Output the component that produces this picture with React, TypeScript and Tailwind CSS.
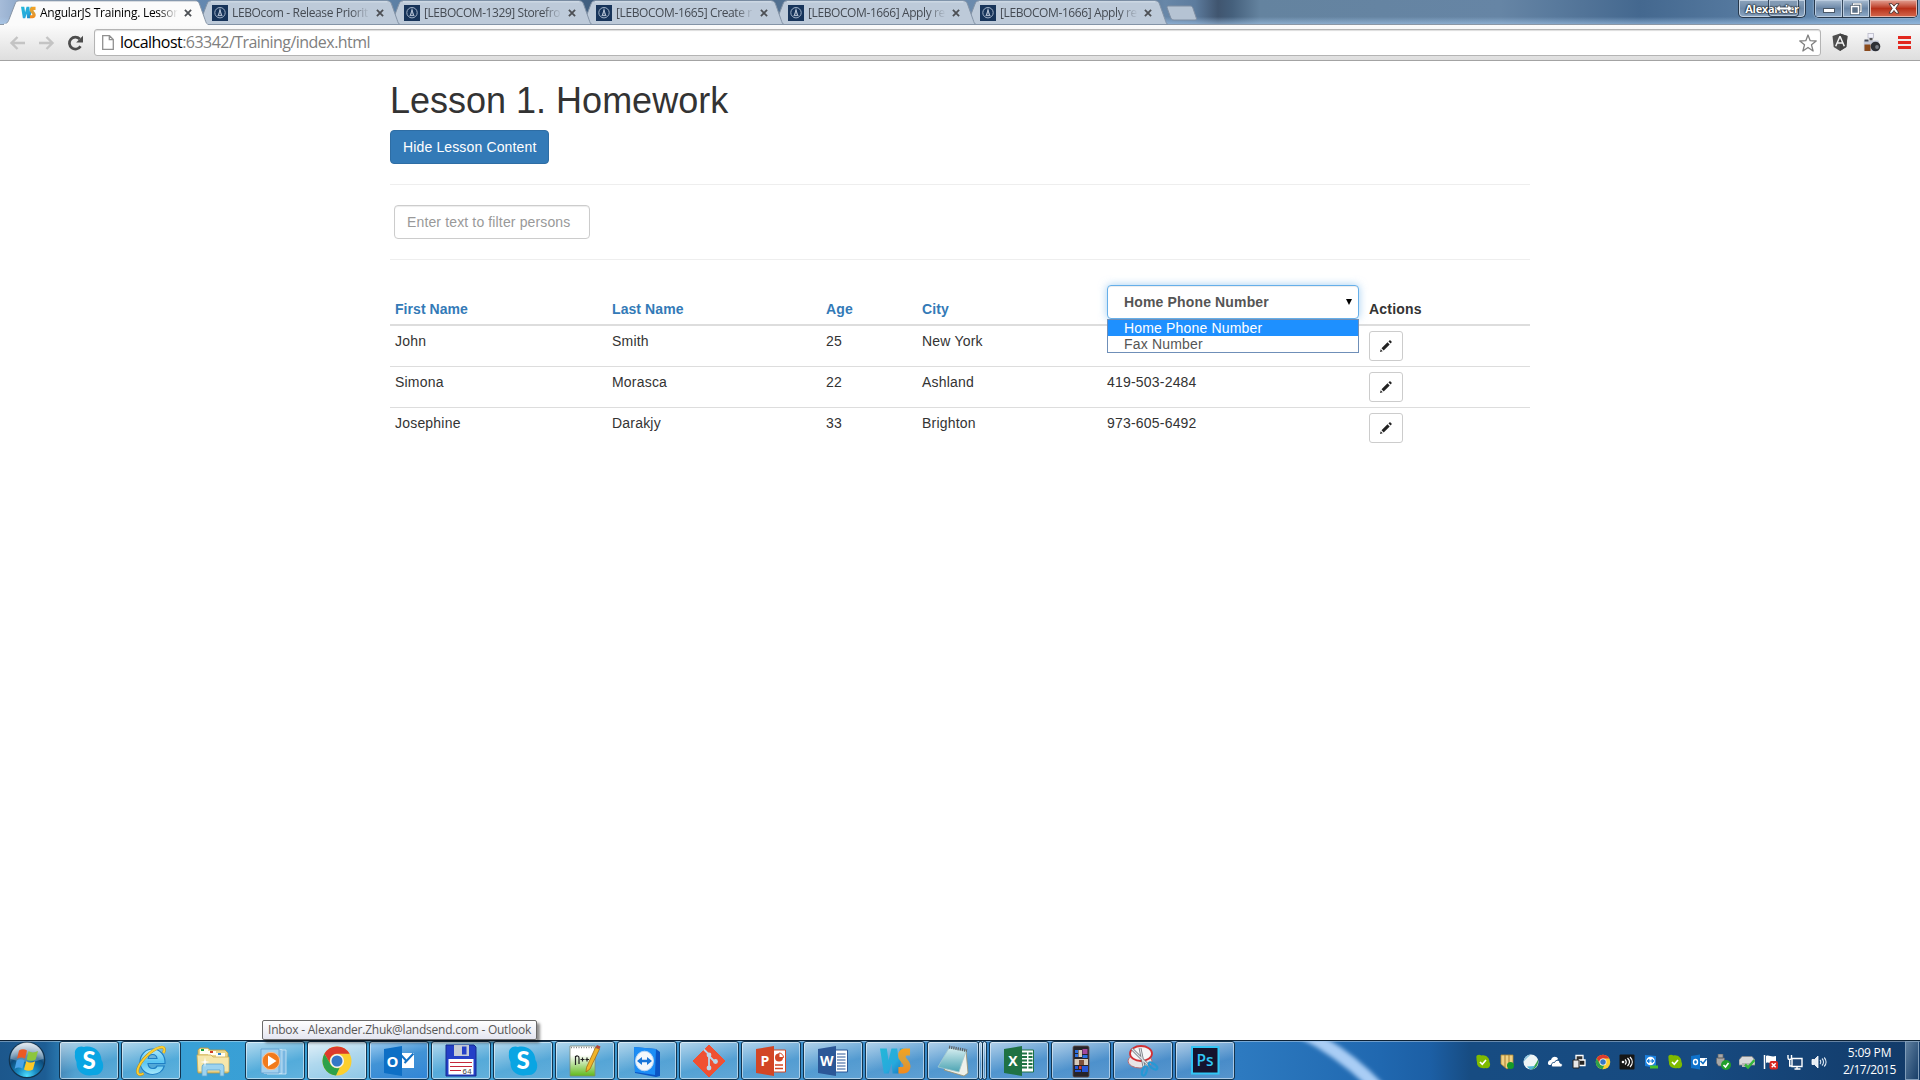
import type { ReactNode } from 'react';

const UI = "font-['Open_Sans','Noto_Sans',sans-serif]";
const BODY = "font-['Liberation_Sans',Arial,sans-serif]";

/* ---------- Browser window ---------- */

function LandsEndFavicon() {
  return (
    <svg className="h-4 w-4 shrink-0" viewBox="0 0 16 16">
      <rect width="16" height="16" fill="#17345a" />
      <circle cx="8" cy="7.7" r="5.2" fill="none" stroke="#9fb0c6" strokeWidth="1" />
      <path d="M8 3.6v6M6.3 10.2l1.7-5 1.7 5M5.6 10.6h4.8" fill="none" stroke="#b5c2d4" strokeWidth="1" />
    </svg>
  );
}

function WebStormMark({ className }: { className: string }) {
  return (
    <svg className={className} viewBox="0 0 32 28" preserveAspectRatio="none">
      <defs>
        <linearGradient id="wsw" x1="0" y1="0" x2="1" y2="1">
          <stop offset="0" stopColor="#23b8d8" />
          <stop offset="0.6" stopColor="#27a9dc" />
          <stop offset="1" stopColor="#1778c0" />
        </linearGradient>
        <linearGradient id="wss" x1="0" y1="0" x2="0" y2="1">
          <stop offset="0" stopColor="#f9a11c" />
          <stop offset="0.45" stopColor="#d9a03a" />
          <stop offset="1" stopColor="#f58a1a" />
        </linearGradient>
      </defs>
      <path d="M0 1.500h7l1.800 12 3-12h6l1.200 11 1.500-11h3.500l-4.500 25h-6.500L12 16.500 9 26.500H4Z" fill="url(#wsw)" />
      <path d="M31 1.500v7h-3c-1.500 0-2 1.200-1 2.400l2.500 3c4 5 1.500 12.600-5 12.600h-5.500v-6.500h3.500c2 0 2.200-1.700 1-3L21 14c-4.500-5-2-12.300 4.500-12.500Z" fill="url(#wss)" />
    </svg>
  );
}

function CloseGlyph() {
  return (
    <svg className="h-2 w-2 shrink-0" viewBox="0 0 8 8">
      <path d="M.9.9l6.200 6.200M7.100.9L.9 7.100" stroke="#4c4f54" strokeWidth="1.800" />
    </svg>
  );
}

type TabInfo = { title: string; active?: boolean; z: string; tracking: string };

const tabs: TabInfo[] = [
  { title: 'AngularJS Training. Lesson', active: true, z: 'z-[6]', tracking: 'tracking-[-0.26px]' },
  { title: 'LEBOcom - Release Priorit', z: 'z-[5]', tracking: 'tracking-[-0.36px]' },
  { title: '[LEBOCOM-1329] Storefro', z: 'z-[4]', tracking: 'tracking-[-0.43px]' },
  { title: '[LEBOCOM-1665] Create r', z: 'z-[3]', tracking: 'tracking-[-0.4px]' },
  { title: '[LEBOCOM-1666] Apply re', z: 'z-[2]', tracking: 'tracking-[-0.4px]' },
  { title: '[LEBOCOM-1666] Apply re', z: 'z-[1]', tracking: 'tracking-[-0.4px]' },
];

function Tab({ tab }: { tab: TabInfo }) {
  return (
    <div className={`relative -mr-[13px] flex h-[25px] w-[205px] shrink-0 items-center pl-[17px] ${tab.z}`}>
      <svg className="absolute inset-0 h-[25px] w-[205px]" viewBox="0 0 205 25">
        <path
          d="M0 24.500C4 24 5 22 6 19.500L12 4C13 1.500 14 .8 16.500.8H192C194.500.8 195.500 1.500 196.500 4L202 19.500C203 22.500 203.500 24 205 24.500Z"
          fill={tab.active ? '#fbfbfb' : '#bdcad9'}
          stroke={tab.active ? '#8795a6' : '#8393a6'}
          strokeWidth="1"
        />
        {tab.active ? (
          <path d="M1 24.500H204.500" stroke="#fbfbfb" strokeWidth="1.500" />
        ) : (
          <path d="M16 1.800H192.500" stroke="#dbe4ee" strokeWidth="1" />
        )}
      </svg>
      <div className="relative flex w-full items-center">
        <span className="flex w-4 shrink-0 justify-center">
          {tab.active ? <WebStormMark className="h-[13px] w-[15px]" /> : <LandsEndFavicon />}
        </span>
        <span
          className={`ml-1 w-[142px] text-[12px] leading-4 whitespace-nowrap ${tab.tracking} ${tab.active ? 'text-black' : 'text-[#454b53]'} [mask-image:linear-gradient(90deg,#000_84%,transparent_97%)]`}
        >
          {tab.title}
        </span>
        <span className="ml-[2px] flex">
          <CloseGlyph />
        </span>
      </div>
    </div>
  );
}

function WindowControls() {
  return (
    <div className="flex items-start">
      <div className="relative mr-2 flex h-[18px] w-[68px] items-center justify-center rounded-b-[5px] border border-t-0 border-[#26384c] bg-linear-to-b from-[#8ca4bd] via-[#6f8aa8] to-[#8aa5c2] shadow-[inset_0_0_0_1px_#c3d2e2]">
        <div className="absolute top-0 right-[6px] flex h-[17px] w-[31px] items-center justify-center rounded-b-[4px] border border-t-0 border-[#34465a] bg-[#8299b3]/60 shadow-[inset_0_0_0_1px_#b9c9db]" />
        <span className="relative text-[11px] leading-4 font-bold tracking-[-0.3px] text-white [text-shadow:0_0_2px_#000,0_0_2px_#000]">
          Alexander
        </span>
        <svg className="absolute top-[4px] right-[12px] h-[9px] w-[18px]" viewBox="0 0 18 9">
          <path d="M.7 4.500L5 .8v2.300h8V.8l4.300 3.700L13 8.200V5.900H5v2.300Z" fill="#fff" stroke="#4a5868" strokeWidth=".8" />
        </svg>
      </div>
      <div className="flex h-[18px] overflow-hidden rounded-b-[5px] border border-t-0 border-[#26384c] shadow-[0_0_2px_#c8d8ea]">
        <div className="flex w-[28px] items-center justify-center border-r border-[#34465a] bg-linear-to-b from-[#a9bdd2] via-[#6a86a6] to-[#8fabc9] shadow-[inset_0_0_0_1px_#bccde0]">
          <div className="mt-1 h-[5px] w-[12px] border border-[#4a5868] bg-white" />
        </div>
        <div className="flex w-[27px] items-center justify-center border-r border-[#34465a] bg-linear-to-b from-[#a9bdd2] via-[#6a86a6] to-[#8fabc9] shadow-[inset_0_0_0_1px_#bccde0]">
          <svg className="h-3 w-3" viewBox="0 0 12 12">
            <path d="M3.500 3V1H11v7.500H9" fill="none" stroke="#43505e" strokeWidth="2.400" />
            <path d="M3.500 3V1H11v7.500H9" fill="none" stroke="#fff" strokeWidth="1.300" />
            <rect x="1.500" y="3.500" width="7" height="7" fill="#5d7187" stroke="#43505e" strokeWidth="2.600" />
            <rect x="1.500" y="3.500" width="7" height="7" fill="#5d7187" stroke="#fff" strokeWidth="1.500" />
          </svg>
        </div>
        <div className="flex w-[47px] items-center justify-center bg-linear-to-b from-[#e2a093] via-[#b83018] to-[#d4684e] shadow-[inset_0_0_0_1px_#e8b4a8]">
          <svg className="h-[11px] w-3" viewBox="0 0 12 11">
            <path d="M1 .7h3l2 2.500L8 .7h3L7.800 5.300 11 10.200H8L6 7.500l-2 2.700H1l3.200-4.900Z" fill="#fff" stroke="#4c3533" strokeWidth=".9" />
          </svg>
        </div>
      </div>
    </div>
  );
}

function TabStrip() {
  return (
    <div className="relative z-10 flex h-[25px] items-start justify-between border-b border-[#8b97a5] bg-[linear-gradient(180deg,transparent_70%,rgba(170,205,240,.55)_100%),linear-gradient(90deg,#a6bcd9_0px,#5e82ab_60px,#6488b0_190px,#5f83a8_380px,#3f5d7d_600px,#43607f_740px,#6384a6_830px,#6d8cae_1000px,#4a6382_1110px,#6887a8_1165px,#5d7c9e_1195px,#40556f_1218px,#45607c_1232px,#64839f_1260px,#6685a5_1500px,#44688f_1640px,#55799f_1740px,#6f98c0_1920px)] pr-[2px] pl-[3px]">
      <div className="flex">
        {tabs.map((tab, i) => (
          <Tab key={i} tab={tab} />
        ))}
        <svg className="mt-[5px] ml-[11px] h-[16px] w-[32px]" viewBox="0 0 32 16">
          <path d="M2.500 1H24c1.500 0 2.300.6 2.800 1.800L30.300 13c.4 1.200 0 2-1.300 2H8c-1.800 0-2.600-.7-3.200-2L1.200 3C.8 1.800 1.200 1 2.500 1Z" fill="#b5c3d3" stroke="#7f8ea2" strokeWidth="1" />
        </svg>
      </div>
      <WindowControls />
    </div>
  );
}

function Toolbar() {
  return (
    <div className="flex h-[36px] items-center border-b border-[#a3a3a3] bg-linear-to-b from-[#fbfbfb] to-[#dedede] pl-[9px]">
      <svg className="h-4 w-[17px]" viewBox="0 0 17 16">
        <path d="M8.500 2L2.500 8l6 6M3 8h13" fill="none" stroke="#c4c4c4" strokeWidth="2.400" />
      </svg>
      <svg className="ml-3 h-4 w-[17px]" viewBox="0 0 17 16">
        <path d="M8.500 2l6 6-6 6M14 8H1" fill="none" stroke="#c4c4c4" strokeWidth="2.400" />
      </svg>
      <svg className="ml-[12px] h-4 w-[17px]" viewBox="0 0 17 16">
        <path d="M13.500 11.200A6 6 0 1 1 12.800 4" fill="none" stroke="#4d4d4d" strokeWidth="2.700" />
        <path d="M16 .8v6.700H9.200Z" fill="#4d4d4d" />
      </svg>
      <div className="ml-[10px] flex h-[27px] w-[1727px] items-center rounded-[3px] border border-[#b4b4b4] bg-white pr-[3px] pl-[7px] shadow-[inset_0_1px_1px_#ddd]">
        <svg className="h-[15px] w-[12px]" viewBox="0 0 12 15">
          <path d="M.7.700h6.800l3.800 3.800v9.800H.7ZM7.300.7v4h4" fill="#fff" stroke="#909090" strokeWidth="1.300" />
        </svg>
        <span className="-mt-px ml-[6px] grow text-[16px] leading-5 tracking-[-0.54px] text-[#808080]">
          <span className="text-black">localhost</span>:63342/Training/index.html
        </span>
        <svg className="h-[18px] w-[18px]" viewBox="0 0 18 18">
          <path d="M9 1l2.200 5.700 6 .3-4.700 3.800L14.100 17 9 13.500 3.900 17l1.600-6.200L.8 7l6-.3Z" fill="#fff" stroke="#808080" strokeWidth="1.300" strokeLinejoin="round" />
        </svg>
      </div>
      <svg className="ml-[11px] h-[19px] w-[16px]" viewBox="0 0 16 19">
        <path d="M8 .5l7.500 2.600-1.200 11L8 18l-6.300-3.900L.5 3.100Z" fill="#4f4f4f" />
        <path d="M8 .5l7.500 2.600-1.200 11L8 18Z" fill="#434343" />
        <path d="M8 3.300l-4.300 9.900M8 3.300l4.300 9.900M5.500 10h5" fill="none" stroke="#f4f4f4" strokeWidth="1.500" />
      </svg>
      <svg className="ml-[15px] h-[20px] w-[19px]" viewBox="0 0 19 20">
        <rect x="5" y=".5" width="5.500" height="4.500" fill="#f1f1fa" stroke="#b9b9c8" strokeWidth=".8" />
        <path d="M6.500 5h3v2.500h-3Z" fill="#555" />
        <rect x=".8" y="7.500" width="15" height="10.500" rx="1" fill="#c3c8d8" />
        <rect x="1.500" y="6.500" width="4" height="2" fill="#444a58" />
        <rect x="1.500" y="11.500" width="6" height="6.500" fill="#8a4a1c" />
        <circle cx="12.500" cy="13.500" r="4.800" fill="#2c2f36" />
        <circle cx="14" cy="14" r="1.900" fill="#777c86" />
      </svg>
      <div className="ml-[16px] flex w-[13px] flex-col gap-[2px]">
        <div className="h-[3px] bg-[#e2281f]" />
        <div className="h-[3px] bg-[#e2281f]" />
        <div className="h-[3px] bg-[#e2281f]" />
      </div>
    </div>
  );
}

/* ---------- Page ---------- */

const people = [
  { first: 'John', last: 'Smith', age: 25, city: 'New York', phone: '' },
  { first: 'Simona', last: 'Morasca', age: 22, city: 'Ashland', phone: '419-503-2484' },
  { first: 'Josephine', last: 'Darakjy', age: 33, city: 'Brighton', phone: '973-605-6492' },
];

const GRID = 'grid grid-cols-[217px_214px_96px_185px_262px_166px]';

function EditButton() {
  return (
    <button className="flex h-[30px] w-[34px] items-center justify-center rounded-[3px] border border-[#ccc] bg-white pb-px">
      <svg className="h-3 w-3" viewBox="0 0 12 12">
        <path d="M0 12l.7-2.700 2 2ZM1.500 8.300l6-6L9.700 4.500l-6 6ZM8.500 1.400L9.400.5c.4-.4.7-.4 1.100 0l1 1c.4.400.4.700 0 1.100l-.9.9Z" fill="#222" />
      </svg>
    </button>
  );
}

function PhoneSelect() {
  return (
    <div className="relative h-[34px] w-[252px]">
      <div className="flex h-[34px] items-center justify-between rounded-[4px] border border-[#66afe9] bg-white pr-[6px] pl-4 text-[#555] shadow-[inset_0_1px_1px_rgba(0,0,0,.075),0_0_8px_rgba(102,175,233,.6)]">
        <span className="font-bold tracking-[0.15px]">Home Phone Number</span>
        <svg className="h-[6px] w-[6px]" viewBox="0 0 6 6">
          <path d="M0 0h6L3 6Z" fill="#000" />
        </svg>
      </div>
      <div className="absolute top-[34px] left-0 z-10 w-[252px] border border-[#6f8fb8] bg-white leading-4 tracking-[0.17px] text-[#555]">
        <div className="bg-[#1e90ff] pl-4 text-white">Home Phone Number</div>
        <div className="pl-4">Fax Number</div>
      </div>
    </div>
  );
}

function Page() {
  return (
    <main className={`mx-auto w-[1140px] grow pt-5 text-[14px] leading-5 tracking-[0.2px] text-[#333] ${BODY}`}>
      <h1 className="h-[49px] text-[36px] leading-[39.6px] font-normal tracking-normal">Lesson 1. Homework</h1>
      <button className="block h-[34px] w-[159px] rounded-[4px] border border-[#2e6da4] bg-[#337ab7] pl-3 text-left tracking-[0.14px] text-white">
        Hide Lesson Content
      </button>
      <hr className="my-5 border-[#eee]" />
      <div className="ml-1 flex h-[34px] w-[196px] items-center rounded-[4px] border border-[#ccc] pl-3 tracking-[0.14px] text-[#999] shadow-[inset_0_1px_1px_rgba(0,0,0,.075)]">
        Enter text to filter persons
      </div>
      <hr className="my-5 border-[#eee]" />
      <div className={`${GRID} items-end border-b-2 border-[#ddd] font-bold *:p-[5px]`}>
        <div className="tracking-[0.06px] text-[#337ab7]">First Name</div>
        <div className="tracking-[0.08px] text-[#337ab7]">Last Name</div>
        <div className="text-[#337ab7]">Age</div>
        <div className="tracking-[0.1px] text-[#337ab7]">City</div>
        <div className="font-normal">
          <PhoneSelect />
        </div>
        <div>Actions</div>
      </div>
      <div className="divide-y divide-[#ddd]">
        {people.map((p) => (
          <div key={p.first} className={`${GRID} *:p-[5px]`}>
            <div>{p.first}</div>
            <div>{p.last}</div>
            <div>{p.age}</div>
            <div>{p.city}</div>
            <div>{p.phone}</div>
            <div>
              <EditButton />
            </div>
          </div>
        ))}
      </div>
    </main>
  );
}

/* ---------- Taskbar icons ---------- */

function Icon({ children }: { children: ReactNode }) {
  return (
    <svg className="h-8 w-8 overflow-visible" viewBox="0 0 32 32">
      {children}
    </svg>
  );
}

const LETTER = "font-['Open_Sans',sans-serif] font-bold";

function SkypeIcon() {
  return (
    <Icon>
      <path d="M2 9C1 4 6 0 11 2c8-2 17 3 17.500 13 4 6 1 16-8 15C10 32 3 26 3.500 17 2 14 1.500 11 2 9Z" fill="#0aa5e3" />
      <text x="16" y="24" textAnchor="middle" fontSize="24" fontWeight="900" fill="#fff" className="font-['Lato',sans-serif]">
        S
      </text>
    </Icon>
  );
}

function IeIcon() {
  return (
    <Icon>
      <defs>
        <linearGradient id="ie" x1="0" y1="0" x2="0" y2="1">
          <stop offset="0" stopColor="#b4ecfc" />
          <stop offset="0.5" stopColor="#58c3f2" />
          <stop offset="1" stopColor="#a5e8fb" />
        </linearGradient>
      </defs>
      <path d="M30 18.500H13c.3 3.300 2 5 5 5 2 0 3.300-.8 4-2.500h7.300c-1.500 5-6 8.500-11.500 8.500C10.500 29.500 5 24 5 17S10.500 4 17.500 4C25 4 30.500 10 30 18.500ZM13.200 13.500h8.800c-.4-2.800-2-4-4.400-4s-4 1.300-4.400 4Z" fill="url(#ie)" stroke="#1f7fc4" strokeWidth="1.200" />
      <path d="M28.500 8c2-4.500.5-7-4-5.500C17 4.500 6 15 3 23.500c-1.500 5 .5 7.500 5.500 5" fill="none" stroke="#b98a12" strokeWidth="2.800" />
      <path d="M28.500 8c2-4.500.5-7-4-5.500C17 4.500 6 15 3 23.500c-1.500 5 .5 7.500 5.500 5" fill="none" stroke="#f9cf34" strokeWidth="1.900" />
    </Icon>
  );
}

function ExplorerIcon() {
  return (
    <Icon>
      <path d="M1 5l2-2h8l2 2h15l3 3v20H1Z" fill="#ead68b" stroke="#b99a45" strokeWidth=".8" />
      <path d="M3 4h8v5H3ZM11 6h8v4h-8ZM19 8h9v4h-9Z" fill="#fffdf0" />
      <path d="M4 4h3v2H4Z" fill="#15a53a" />
      <path d="M13 6h3v2h-3Z" fill="#d23a24" />
      <path d="M21 8h3v2h-3Z" fill="#2b82d0" />
      <path d="M0 10h14l2 2h16v15H1Z" fill="#f6e7ab" stroke="#cfae55" strokeWidth=".8" />
      <path d="M5 31v-8c0-3 1-4 3-4h16c2 0 3 1 3 4v8h-4v-6H10v6Z" fill="#9dd3ef" stroke="#5aa3cf" strokeWidth=".8" />
      <path d="M8 12l.8 4.200 4.200.8-4.200.8L8 22l-.8-4.200L3 17l4.200-.8Z" fill="#fff" />
    </Icon>
  );
}

function MediaPlayerIcon() {
  return (
    <Icon>
      <path d="M8 5h19v24H8Z" fill="#79b7e2" stroke="#d3ebf9" strokeWidth=".8" />
      <path d="M5 4.500h18v24H5Z" fill="#8fc6ea" stroke="#c9e5f6" strokeWidth=".8" />
      <path d="M2 4h18v24H2Z" fill="#a2d0ee" stroke="#5d9ccb" strokeWidth=".8" />
      <circle cx="12" cy="16" r="8.700" fill="#f17a1c" stroke="#fbc396" strokeWidth="1" />
      <path d="M9 10.500l8.500 5.500L9 21.500Z" fill="#fff" />
    </Icon>
  );
}

function ChromeDisc() {
  return (
    <>
      <circle cx="16" cy="16" r="14.500" fill="#fbcf2f" />
      <path d="M3.400 8.800A14.500 14.500 0 0 1 28.600 8.800H16a7.200 7.200 0 0 0-6.300 10.800Z" fill="#dc3a2c" />
      <path d="M3.400 8.800l6.300 10.800A7.200 7.200 0 0 0 18.600 22.700L15 30.500A14.500 14.500 0 0 1 3.400 8.800Z" fill="#2da14a" />
      <circle cx="16" cy="16" r="7" fill="#f4f4f4" />
      <circle cx="16" cy="16" r="5.500" fill="#3577c6" />
    </>
  );
}

function ChromeIcon() {
  return (
    <Icon>
      <ChromeDisc />
    </Icon>
  );
}

function OutlookIcon() {
  return (
    <Icon>
      <path d="M17 8h14v15H17Z" fill="#fff" />
      <path d="M18 10l5.500 6L30.500 8.500M23.500 16l-2 2" fill="none" stroke="#1371c4" strokeWidth="2" />
      <path d="M1 4l18-3v30L1 28Z" fill="#0d6fc5" />
      <text x="9.500" y="21.500" textAnchor="middle" fontSize="15" fill="#fff" className={LETTER}>
        O
      </text>
    </Icon>
  );
}

function FloppyIcon() {
  return (
    <Icon>
      <path d="M1 0h28l2 2v29H1Z" fill="#2440c8" stroke="#152a8f" strokeWidth="1" />
      <path d="M9 0h15v11H9Z" fill="#c5cbd6" />
      <path d="M17 1.500h4.500v8H17Z" fill="#2440c8" />
      <path d="M3.500 14h25v15.500h-25Z" fill="#fff" />
      <path d="M5 17.500h22M5 21.500h22M5 25.500h11" stroke="#c4283a" strokeWidth="1" />
      <text x="22" y="28.500" textAnchor="middle" fontSize="8" fill="#444" className="font-['Liberation_Mono',monospace]">
        64
      </text>
    </Icon>
  );
}

function NotepadPlusIcon() {
  return (
    <Icon>
      <defs>
        <linearGradient id="npp" x1="0" y1="0" x2="0" y2="1">
          <stop offset="0.3" stopColor="#fff" />
          <stop offset="1" stopColor="#5fb91a" />
        </linearGradient>
      </defs>
      <path d="M1 1h25v30H1Z" fill="url(#npp)" stroke="#7d8a7a" strokeWidth=".8" />
      <path d="M2 2.500h23" stroke="#888" strokeWidth="1.500" strokeDasharray="1 1.500" />
      <path d="M6.500 20v-9M6.500 12c1-1.500 3.500-1.500 3.500 1v6M11.500 14.500h4M13.500 12.500v4M16.500 14.500h3.500M18 12.500v4" fill="none" stroke="#222" strokeWidth="1.200" />
      <path d="M26.500 2.500l4 1.500L21 24l-4 3 .5-4.500Z" fill="#f0b429" stroke="#a46b17" strokeWidth=".8" />
      <path d="M26.500 2.500L28 0l3.500 1.500L30.500 4Z" fill="#b5483a" />
    </Icon>
  );
}

function TeamViewerIcon() {
  return (
    <Icon>
      <path d="M3 2l22 2 4 3v24l-4 1L4 28Z" fill="#0b55c4" />
      <path d="M3 2l22 2-1 26-20-3Z" fill="#1c8df5" />
      <ellipse cx="13.500" cy="16" rx="9" ry="9.800" fill="#f3f7fb" stroke="#b6d6f5" strokeWidth="1" />
      <path d="M6 16l5-4v2.700h5V12l5 4-5 4v-2.700h-5V20Z" fill="#1774d8" />
    </Icon>
  );
}

function GitIcon() {
  return (
    <Icon>
      <path d="M16 0l16 16-16 16L0 16Z" fill="#f05033" strokeLinejoin="round" stroke="#f05033" strokeWidth="1" />
      <path d="M11 4.500l5 5v14M16 11l6 6" fill="none" stroke="#b9d8ee" strokeWidth="1.800" />
      <circle cx="16" cy="10" r="2.400" fill="#b9d8ee" />
      <circle cx="16" cy="23" r="2.400" fill="#b9d8ee" />
      <circle cx="22.500" cy="16.500" r="2.400" fill="#b9d8ee" />
    </Icon>
  );
}

function OfficeIcon({ letter, color, children }: { letter: string; color: string; children: ReactNode }) {
  return (
    <Icon>
      <path d="M17 5h13.500v22H17Z" fill="#fff" stroke={color} strokeWidth="1" />
      {children}
      <path d="M1 4l18-3v30L1 28Z" fill={color} />
      <text x="9.800" y="21" textAnchor="middle" fontSize="14" fill="#fff" className={LETTER}>
        {letter}
      </text>
    </Icon>
  );
}

function NotepadIcon() {
  return (
    <Icon>
      <defs>
        <linearGradient id="pad" x1="0" y1="0" x2="0" y2="1">
          <stop offset="0" stopColor="#d6eef0" />
          <stop offset="1" stopColor="#4ba3b2" />
        </linearGradient>
      </defs>
      <path d="M29 5l2 23-4 3-20-6Z" fill="#eef0ea" stroke="#9b8f6a" strokeWidth=".8" />
      <path d="M12 3l17 3-7 21L1 22Z" fill="url(#pad)" stroke="#a5c9cf" strokeWidth=".8" />
      <path d="M12 2l18 3.500" stroke="#5c5f62" strokeWidth="3" strokeDasharray="1.200 1" />
    </Icon>
  );
}

function PhoneIcon() {
  return (
    <Icon>
      <rect x="8" y="1" width="16" height="31" rx="1.500" fill="#26242a" stroke="#6a5149" strokeWidth=".8" />
      <path d="M10 5h3v3h-3ZM10 9h3v3h-3Z" fill="#2b6fe0" />
      <path d="M17.500 4h5v5h-5Z" fill="#a5489c" />
      <path d="M13.500 5h3.500v7h-3.500ZM9.500 14h13.500v6H9.500Z" fill="#d6c9b8" />
      <path d="M14 15h5v5h-5Z" fill="#7d4f3a" />
      <path d="M17.500 10h5v3h-5Z" fill="#2b6fe0" />
      <path d="M10 21h3v3h-3ZM17 21h6v6h-6ZM10 25h6v2h-6Z" fill="#2456d8" />
      <path d="M14 21h2.500v3H14Z" fill="#d33a3a" />
    </Icon>
  );
}

function SnippingIcon() {
  return (
    <Icon>
      <ellipse cx="13" cy="16" rx="12" ry="7" fill="#e9e4e6" stroke="#b86a70" strokeWidth="1" />
      <ellipse cx="14" cy="8.500" rx="11" ry="7.500" fill="#f5f7f8" stroke="#d23034" strokeWidth="1.800" />
      <path d="M5 4l17 17M13 3l4 19" stroke="#747a80" strokeWidth="2.800" />
      <path d="M5 4l17 17M13 3l4 19" stroke="#dfe3e6" strokeWidth="1.200" />
      <ellipse cx="26" cy="21" rx="2.200" ry="5" transform="rotate(-55 26 21)" fill="none" stroke="#2698d4" strokeWidth="2.200" />
      <ellipse cx="17.500" cy="26" rx="2.200" ry="4.700" transform="rotate(18 17.500 26)" fill="none" stroke="#2698d4" strokeWidth="2.200" />
    </Icon>
  );
}

function PhotoshopIcon() {
  return (
    <Icon>
      <rect x="3" y="2" width="26.500" height="26.500" fill="#15142e" stroke="#31c5f4" strokeWidth="2" />
      <text x="16" y="21" textAnchor="middle" fontSize="15.500" fill="#31c5f4" className="font-['Open_Sans',sans-serif] font-semibold">
        Ps
      </text>
    </Icon>
  );
}

/* ---------- Taskbar ---------- */

type AppButton = { id: string; icon: ReactNode; look?: 'bare' | 'bright' | 'hot' };

const apps: AppButton[] = [
  { id: 'skype', icon: <SkypeIcon /> },
  { id: 'ie', icon: <IeIcon /> },
  { id: 'explorer', icon: <ExplorerIcon />, look: 'bare' },
  { id: 'wmp', icon: <MediaPlayerIcon /> },
  { id: 'chrome', icon: <ChromeIcon />, look: 'bright' },
  { id: 'outlook', icon: <OutlookIcon />, look: 'hot' },
  { id: 'commander', icon: <FloppyIcon /> },
  { id: 'skype-chat', icon: <SkypeIcon /> },
  { id: 'npp', icon: <NotepadPlusIcon /> },
  { id: 'teamviewer', icon: <TeamViewerIcon /> },
  { id: 'git', icon: <GitIcon /> },
  {
    id: 'powerpoint',
    icon: (
      <OfficeIcon letter="P" color="#d24625">
        <circle cx="24" cy="12.500" r="4" fill="#d24625" />
        <path d="M24 12.500V8a4.500 4.500 0 0 1 4.500 4.500Z" fill="#fff" stroke="#d24625" strokeWidth="1" />
        <path d="M20 20h8M20 23.500h8" stroke="#d24625" strokeWidth="1.600" />
      </OfficeIcon>
    ),
  },
  {
    id: 'word',
    icon: (
      <OfficeIcon letter="W" color="#2b5797">
        <path d="M20 9h8.500M20 12h8.500M20 15h8.500M20 18h8.500M20 21h8.500M20 24h8.500" stroke="#2b5797" strokeWidth="1.200" />
      </OfficeIcon>
    ),
  },
  { id: 'webstorm', icon: <WebStormMark className="h-[28px] w-[31px]" /> },
];

const moreApps: AppButton[] = [
  {
    id: 'excel',
    icon: (
      <OfficeIcon letter="X" color="#1f7244">
        <path d="M19 8.500h5M19 12h5M19 15.500h5M19 19h5M19 22.500h5M25.500 8.500h4M25.500 12h4M25.500 15.500h4M25.500 19h4M25.500 22.500h4" stroke="#1f7244" strokeWidth="1.800" />
      </OfficeIcon>
    ),
  },
  { id: 'phone', icon: <PhoneIcon /> },
  { id: 'snip', icon: <SnippingIcon /> },
  { id: 'photoshop', icon: <PhotoshopIcon /> },
];

const FRAME = 'rounded-[3px] border border-[#12344f] shadow-[inset_0_0_0_1px_rgba(255,255,255,.5)]';
const GLASS = 'bg-[linear-gradient(165deg,rgba(255,255,255,.62)_0%,rgba(255,255,255,.3)_38%,rgba(255,255,255,.13)_60%,rgba(255,255,255,.2)_100%)]';
const BRIGHT = 'bg-[linear-gradient(165deg,rgba(255,255,255,.85)_0%,rgba(255,255,255,.6)_45%,rgba(255,255,255,.42)_100%)]';
const HOT = 'bg-[linear-gradient(165deg,rgba(190,220,250,.75)_0%,rgba(70,140,215,.6)_45%,rgba(45,125,215,.75)_100%)]';

function TaskButton({ app }: { app: AppButton }) {
  const surface = app.look === 'bare' ? '' : `${FRAME} ${app.look === 'bright' ? BRIGHT : app.look === 'hot' ? HOT : GLASS}`;
  return <div className={`flex h-[39px] w-[60px] shrink-0 items-center justify-center ${surface}`}>{app.icon}</div>;
}

function StartOrb() {
  return (
    <svg className="mx-[8px] h-[38px] w-[38px] shrink-0" viewBox="0 0 38 38">
      <defs>
        <radialGradient id="orb" cx=".5" cy=".95" r=".9">
          <stop offset="0" stopColor="#4fe0ff" />
          <stop offset="0.3" stopColor="#1a8cc4" />
          <stop offset="0.65" stopColor="#0d4a7a" />
          <stop offset="1" stopColor="#8aa9c4" />
        </radialGradient>
        <linearGradient id="gloss" x1="0" y1="0" x2="0" y2="1">
          <stop offset="0" stopColor="#fff" stopOpacity=".75" />
          <stop offset="1" stopColor="#fff" stopOpacity=".2" />
        </linearGradient>
      </defs>
      <circle cx="19" cy="19" r="17.700" fill="url(#orb)" stroke="#12344f" strokeWidth="1.200" />
      <path d="M2.500 18A16.500 16.500 0 0 1 35.500 18Q19 24 2.500 18Z" fill="url(#gloss)" />
      <path d="M11 9.500c2.500-1.700 5.500-1.700 8 0l-2 8.300c-2.500-1.600-5.300-1.600-8 0Z" fill="#ec5a24" />
      <path d="M20.500 10.300c3 1.600 6 1.500 9.500-.3l-2.300 8.500c-3 1.700-6.200 1.700-9 0Z" fill="#8cc63e" />
      <path d="M8.600 19.400c2.700-1.600 5.400-1.600 8 0l-2.200 8.300c-2.400-1.600-5-1.600-7.700 0Z" fill="#4aa3e8" />
      <path d="M18.200 20.200c2.800 1.600 6 1.600 9 0L25 28.500c-3 1.700-6 1.600-9 0Z" fill="#fcc927" />
    </svg>
  );
}

const GREEN_SKYPE = (
  <>
    <path d="M1.500 4C.5 1 4 0 6.500 1.500c4-1 8 2 8 6.500 2 4-1 7-4 6C5 15 1.500 12 2 8 1.500 6.500 1.500 5 1.500 4Z" fill="#7fba00" />
    <path d="M5 8l2.300 2.300L11 6" fill="none" stroke="#fff" strokeWidth="1.700" />
  </>
);

const trayIcons: { id: string; art: ReactNode }[] = [
  { id: 'lync', art: GREEN_SKYPE },
  {
    id: 'map',
    art: (
      <>
        <path d="M2 1h12v9l-6 5-6-5Z" fill="#f0d184" stroke="#b28b33" strokeWidth=".8" />
        <path d="M6 1v12M10 1v12" stroke="#a87f2c" strokeWidth="1" />
        <circle cx="11.500" cy="11.500" r="3.500" fill="#189a28" />
      </>
    ),
  },
  {
    id: 'sync',
    art: (
      <>
        <circle cx="8" cy="8" r="7.500" fill="#eef5f6" />
        <path d="M15 5.500c1 4-2 10-7 10 3-2.500 5-6 7-10Z" fill="#33a14a" />
        <path d="M.5 8A7.500 7.500 0 0 1 8 .5C5 3 3 5 .5 8Z" fill="#8bc3de" />
        <path d="M4 12.500c1.500 2 3 3 4 3 2-1 3-2 4-3.500Z" fill="#4bb4d6" />
      </>
    ),
  },
  {
    id: 'cloud',
    art: (
      <>
        <path d="M1 10c-.5-4 3-4 3-4 1-4 6-4 7-1l-5 6H2Z" fill="#fff" />
        <path d="M5 13c-2-3 1-5 2.500-4.500C9 5 13 6 13 9c3 0 3 4 .5 4Z" fill="#fff" stroke="#1c4c80" strokeWidth="1" />
      </>
    ),
  },
  {
    id: 'windows',
    art: (
      <>
        <path d="M5 1.500h7v7H5Z" fill="#333" stroke="#fff" strokeWidth="1.300" />
        <path d="M8 6h6v5.500H8Z" fill="#222" stroke="#fff" strokeWidth="1.300" />
        <path d="M2 6h6v8H2Z" fill="#e9e9e9" stroke="#222" strokeWidth="1" />
      </>
    ),
  },
  {
    id: 'chrome',
    art: (
      <g transform="scale(.5)">
        <ChromeDisc />
      </g>
    ),
  },
  {
    id: 'cast',
    art: (
      <>
        <rect x=".5" y=".5" width="15" height="15" rx="1" fill="#161616" />
        <circle cx="4" cy="8" r="1.300" fill="#fff" />
        <path d="M6 5.500c1.500 1.500 1.500 3.500 0 5M8.500 4c2.500 2.500 2.500 5.500 0 8M11 3c3 3 3 7 0 10" fill="none" stroke="#fff" strokeWidth="1.200" />
      </>
    ),
  },
  {
    id: 'teamviewer',
    art: (
      <>
        <path d="M2 1l11 1v12l-11-2Z" fill="#1c82e0" />
        <circle cx="7.500" cy="7" r="4.300" fill="#fff" />
        <path d="M4 7l2-1.800v3.600ZM11 7L9 5.200v3.600ZM5 7h5" fill="#1c82e0" stroke="#1c82e0" strokeWidth=".9" />
        <path d="M7 11.500h8v3H7Z" fill="#44c02c" />
      </>
    ),
  },
  { id: 'lync-2', art: GREEN_SKYPE },
  {
    id: 'outlook',
    art: (
      <>
        <path d="M8 4h8v8H8Z" fill="#fff" />
        <path d="M9.500 7l2.500 2.500L15.500 5" fill="none" stroke="#0f6fc6" strokeWidth="1.500" />
        <path d="M0 2l9-1.500v15L0 14Z" fill="#0f72cc" />
        <ellipse cx="4.500" cy="8" rx="2" ry="2.500" fill="none" stroke="#fff" strokeWidth="1.400" />
      </>
    ),
  },
  {
    id: 'usb',
    art: (
      <>
        <path d="M3 0h5v4H3ZM1.500 4h8v5l-2 3h-4l-2-3Z" fill="#a8a8a8" stroke="#666" strokeWidth=".7" />
        <circle cx="11" cy="11" r="5" fill="#21a02c" />
        <path d="M8.500 11l2 2 3-4" fill="none" stroke="#fff" strokeWidth="1.600" />
      </>
    ),
  },
  {
    id: 'printer',
    art: (
      <>
        <path d="M3 2.500h10l3 3.500v5H0V6Z" fill="#d8d8d8" stroke="#888" strokeWidth=".8" />
        <path d="M3 9h8v4H3Z" fill="#b5b5b5" />
        <path d="M6 10.500l3 3L15.500 6" fill="none" stroke="#35b53c" strokeWidth="2.500" />
      </>
    ),
  },
  {
    id: 'flag',
    art: (
      <>
        <path d="M1.500 1v14" stroke="#fff" strokeWidth="1.500" />
        <path d="M3 2c3-1.500 5 1.500 10 0v7c-5 1.500-7-1.500-10 0Z" fill="#fff" />
        <rect x="6.500" y="7" width="8.500" height="8.500" rx="2" fill="#d9271f" />
        <path d="M8.700 9.200l4 4M12.700 9.200l-4 4" stroke="#fff" strokeWidth="1.500" />
      </>
    ),
  },
  {
    id: 'network',
    art: (
      <>
        <path d="M5 4.500h10v8H5ZM7.500 15h6M10 12.500V15" fill="#1c4474" stroke="#fff" strokeWidth="1.400" />
        <path d="M1 1v3c0 1 .5 1.500 1.500 1.500S4.500 5 4.500 4V1M2.700 5.500V12H5" fill="none" stroke="#fff" strokeWidth="1.400" />
      </>
    ),
  },
  {
    id: 'volume',
    art: (
      <>
        <path d="M1 5.500h2.500L7 2v12l-3.500-3.500H1Z" fill="#e8eef5" stroke="#fff" strokeWidth=".8" />
        <path d="M9 6c1 1 1 3 0 4M11 4.500c2 2 2 5 0 7M13.200 3.500c2.500 2.500 2.500 6.500 0 9" fill="none" stroke="#dbe6f2" strokeWidth="1.100" />
      </>
    ),
  },
];

function Taskbar() {
  return (
    <div className="relative flex h-[40px] shrink-0 items-start border-t border-[#0d2236] bg-[linear-gradient(180deg,rgba(255,255,255,.35)_0px,rgba(255,255,255,.35)_1px,transparent_1px),linear-gradient(90deg,#1c578c_0px,#1d5d94_45px,#3592c9_75px,#38a0d6_190px,#3d9dd3_500px,#3a8ecb_800px,#3583c6_1050px,#2d7ac0_1240px,#2068b0_1380px,#1c5fa5_1430px,#174c82_1470px,#174a80_1700px,#123a68_1920px)]">
      <svg className="absolute top-0 left-[1290px] h-[39px] w-[110px]" viewBox="0 0 110 39">
        <defs>
          <filter id="soft" x="-20%" y="-20%" width="140%" height="140%">
            <feGaussianBlur stdDeviation="2" />
          </filter>
        </defs>
        <path d="M8 -4Q44 14 76 44H94Q66 14 34 -4Z" fill="#a9cdf5" filter="url(#soft)" />
      </svg>
      <div className="flex w-[59px] shrink-0">
        <StartOrb />
      </div>
      <div className="flex gap-[2px]">
        {apps.map((app) => (
          <TaskButton key={app.id} app={app} />
        ))}
        <div className="flex w-[60px]">
          <div className={`z-[1] flex h-[39px] w-[52px] items-center justify-center ${FRAME} ${GLASS}`}>
            <NotepadIcon />
          </div>
          <div className={`-ml-px h-[39px] w-[5px] ${FRAME} ${GLASS}`} />
          <div className={`-ml-px h-[39px] w-[5px] ${FRAME} ${GLASS}`} />
        </div>
        {moreApps.map((app) => (
          <TaskButton key={app.id} app={app} />
        ))}
      </div>
      <div className="ml-auto flex h-[39px] items-center">
        {trayIcons.map((t) => (
          <div key={t.id} className="flex w-6 justify-center pt-[3px]">
            <svg className="h-4 w-4" viewBox="0 0 16 16">
              {t.art}
            </svg>
          </div>
        ))}
        <div className="w-[74px] pl-[3px] text-center text-[12px] leading-[17px] text-white">
          <div className="tracking-[-0.2px]">5:09 PM</div>
          <div className="tracking-[-0.43px]">2/17/2015</div>
        </div>
        <div className="mr-px h-[39px] w-[14px] border border-[#7f9cb9] bg-linear-to-br from-[#5f7f9f] to-[#183f69]" />
      </div>
    </div>
  );
}

export default function App() {
  return (
    <div className={`relative flex h-[1080px] w-full flex-col overflow-hidden bg-white ${UI}`}>
      <TabStrip />
      <Toolbar />
      <Page />
      <Taskbar />
      <div className="absolute top-[1020px] left-[262px] z-20 flex h-[20px] w-[275px] items-center justify-center rounded-[2px] border border-[#6b6b6b] bg-linear-to-b from-white to-[#e4e5f0] text-[12px] leading-4 tracking-[-0.24px] whitespace-nowrap text-[#575757] shadow-[3px_3px_3px_rgba(0,0,0,.45)]">
        Inbox - Alexander.Zhuk@landsend.com - Outlook
      </div>
    </div>
  );
}
